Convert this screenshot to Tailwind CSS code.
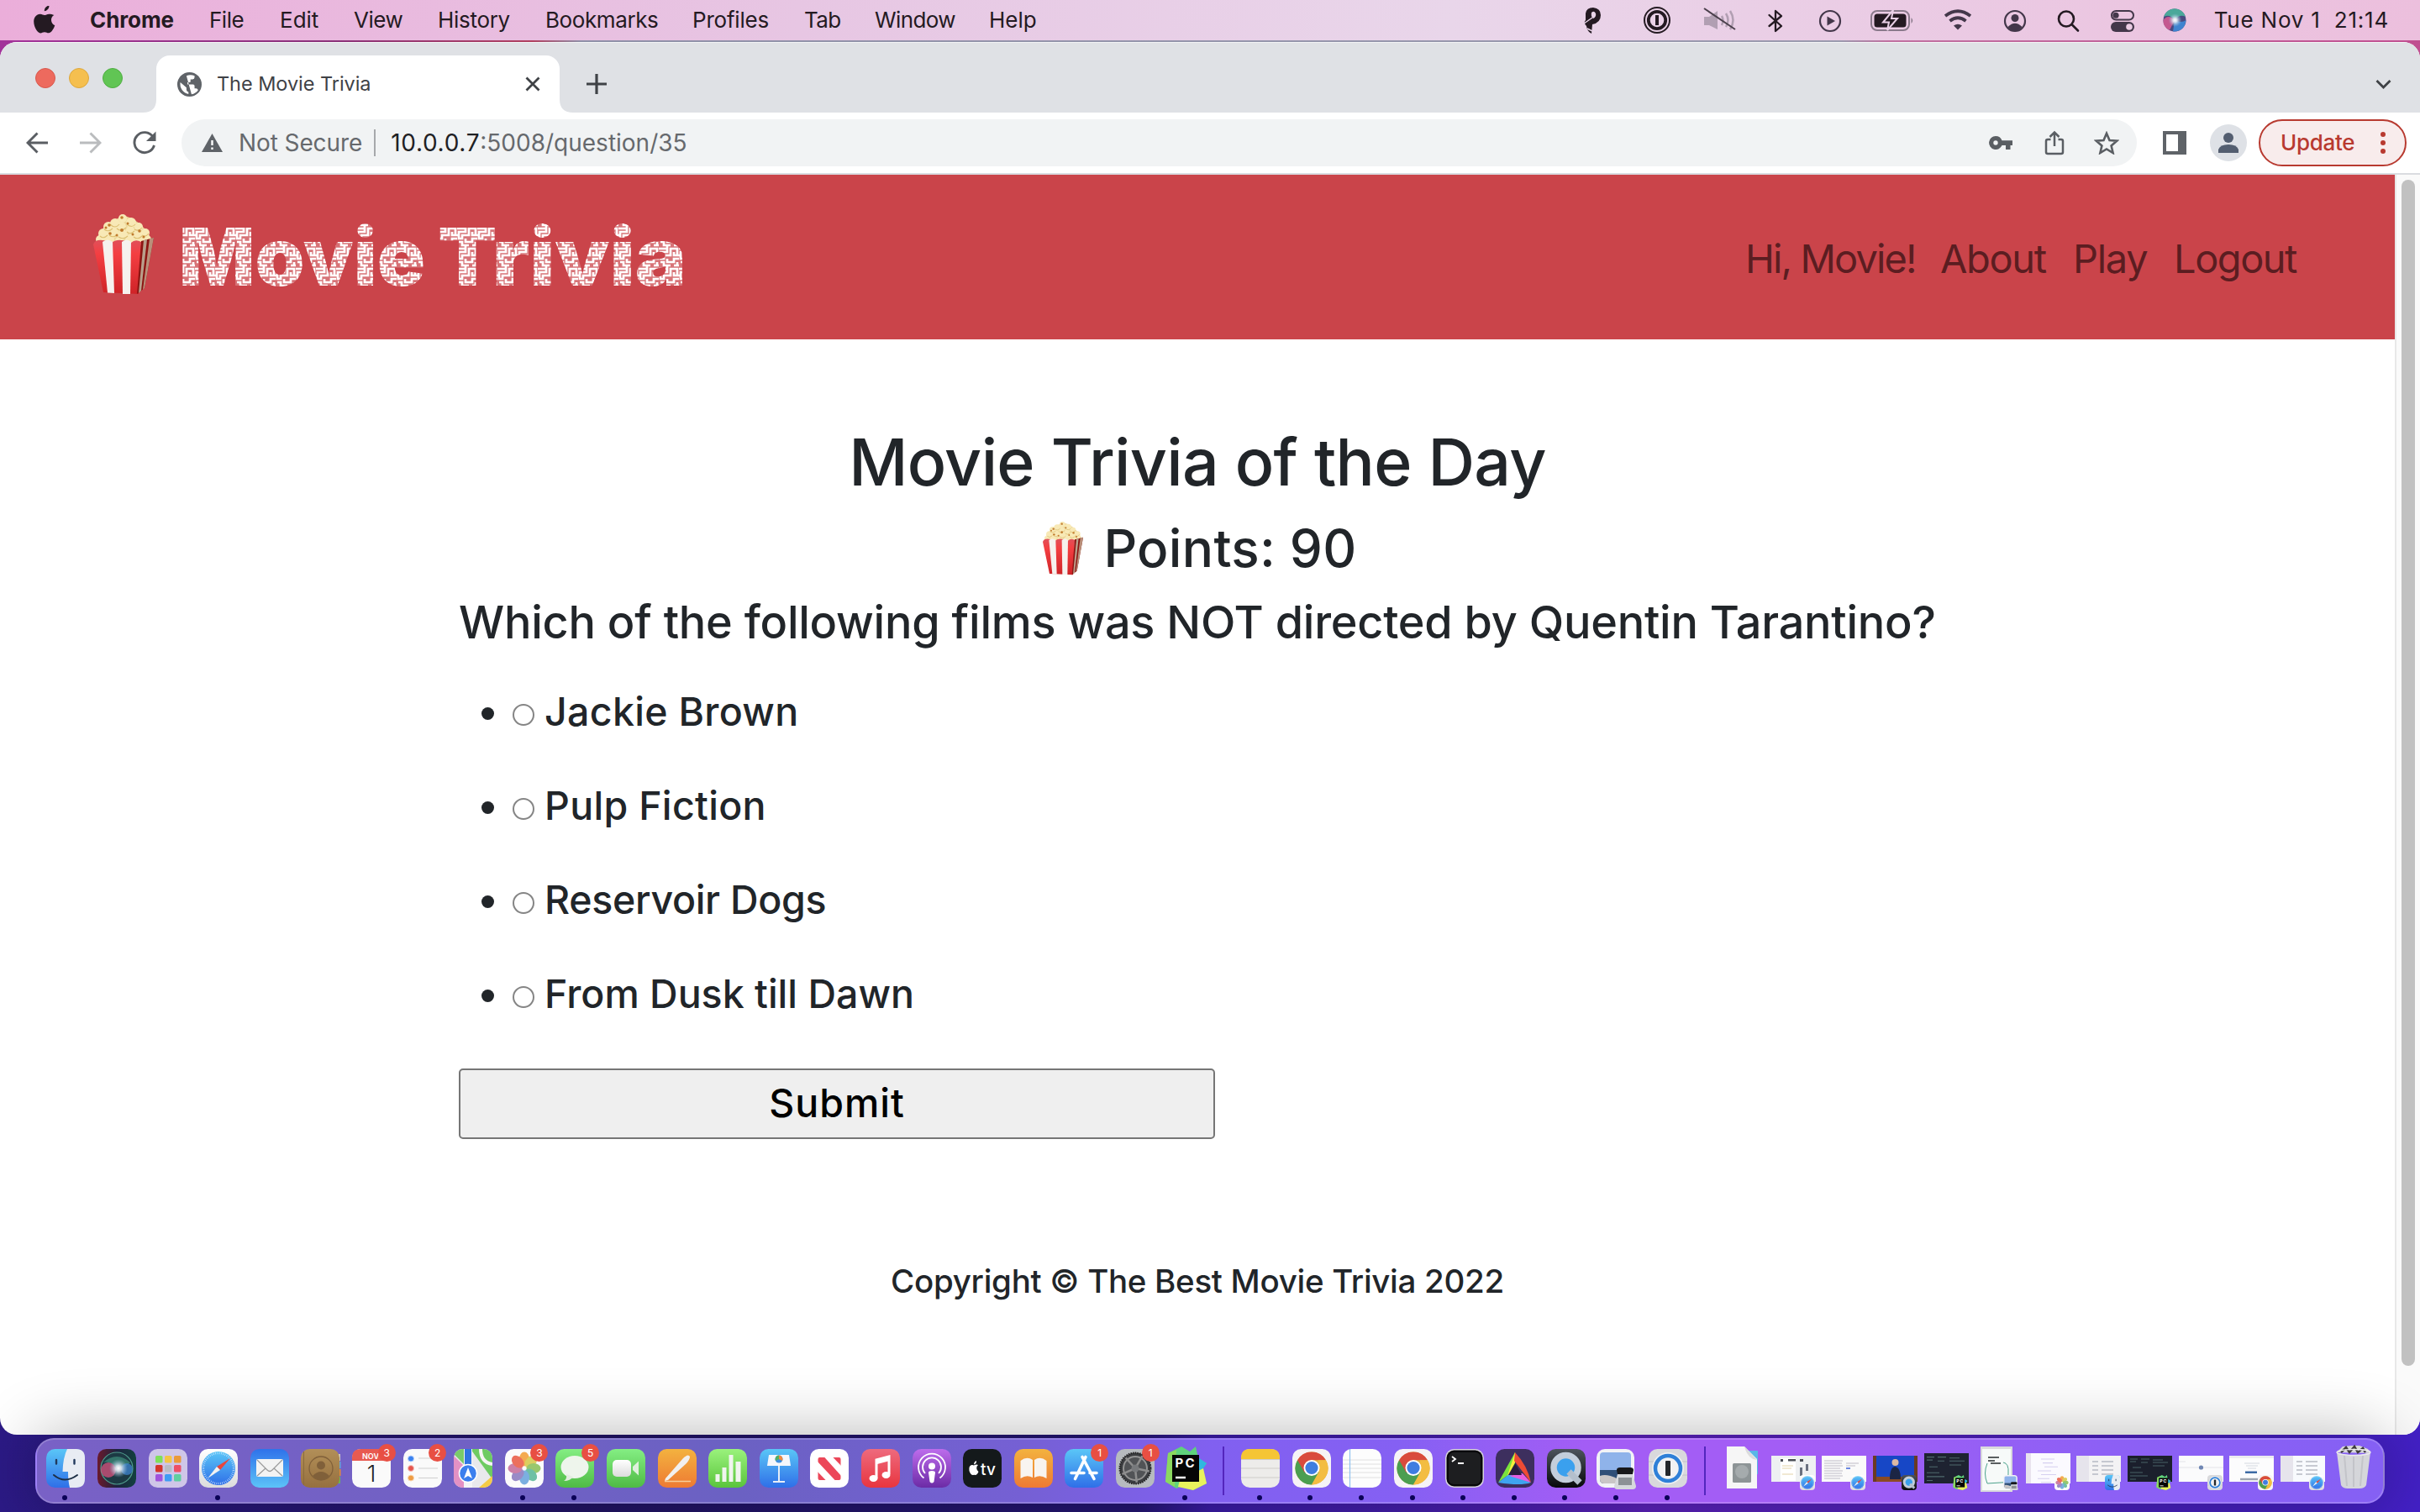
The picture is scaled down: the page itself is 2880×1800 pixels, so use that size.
<!DOCTYPE html>
<html lang="en">
<head>
<meta charset="utf-8">
<title>The Movie Trivia</title>
<script src="https://cdn.jsdelivr.net/npm/@tailwindcss/browser@4"></script>
</head>
<body class="w-[2880px] h-[1800px] overflow-hidden font-[Inter,sans-serif]">

<svg class="absolute w-0 h-0" aria-hidden="true">
  <defs>
    <linearGradient id="gBlue" x1="0" y1="0" x2="0" y2="1"><stop offset="0" stop-color="#5ac6f7"/><stop offset="1" stop-color="#2f6fe8"/></linearGradient>
    <linearGradient id="gMail" x1="0" y1="0" x2="0" y2="1"><stop offset="0" stop-color="#2f72ea"/><stop offset="1" stop-color="#5cc3f8"/></linearGradient>
    <linearGradient id="gGreen" x1="0" y1="0" x2="0" y2="1"><stop offset="0" stop-color="#84ee83"/><stop offset="1" stop-color="#4fbb45"/></linearGradient>
    <linearGradient id="gLime" x1="0" y1="0" x2="0" y2="1"><stop offset="0" stop-color="#9af27c"/><stop offset="1" stop-color="#5ac43c"/></linearGradient>
    <linearGradient id="gOrange" x1="0" y1="0" x2="0" y2="1"><stop offset="0" stop-color="#f3b23f"/><stop offset="1" stop-color="#ee7a33"/></linearGradient>
    <linearGradient id="gRed" x1="0" y1="0" x2="0" y2="1"><stop offset="0" stop-color="#ee6a7d"/><stop offset="1" stop-color="#e8353f"/></linearGradient>
    <linearGradient id="gPurple" x1="0" y1="0" x2="0" y2="1"><stop offset="0" stop-color="#bd6cec"/><stop offset="1" stop-color="#6c2ba6"/></linearGradient>
    <linearGradient id="gWhite" x1="0" y1="0" x2="0" y2="1"><stop offset="0" stop-color="#ffffff"/><stop offset="1" stop-color="#dcdcdc"/></linearGradient>
    <linearGradient id="gBrown" x1="0" y1="0" x2="0" y2="1"><stop offset="0" stop-color="#b28f58"/><stop offset="1" stop-color="#96703f"/></linearGradient>
    <linearGradient id="gDark" x1="0" y1="0" x2="0" y2="1"><stop offset="0" stop-color="#4d545c"/><stop offset="1" stop-color="#08090b"/></linearGradient>
    <linearGradient id="gSiri" x1="0" y1="0" x2="1" y2="0"><stop offset="0" stop-color="#6a1a2c"/><stop offset=".5" stop-color="#1d2340"/><stop offset="1" stop-color="#12413f"/></linearGradient>
    <radialGradient id="gOrb"><stop offset="0" stop-color="#fff"/><stop offset=".3" stop-color="#e6eef6" stop-opacity=".9"/><stop offset="1" stop-color="#8fb8d8" stop-opacity="0"/></radialGradient>
    <linearGradient id="gStripe" x1="0" y1="0" x2="0" y2="1"><stop offset="0" stop-color="#e0505a"/><stop offset=".25" stop-color="#f43f42"/><stop offset="1" stop-color="#cf2327"/></linearGradient>
    <pattern id="maze" width="24" height="24" patternUnits="userSpaceOnUse">
      <rect width="24" height="24" fill="#fff" fill-opacity=".25"/>
      <path d="M0 2H10V6H2V14H6V10H14V2H22V10H18V6M24 14H18V18H10V14M2 18H6V22H14M18 22H24M10 22V24M10 0V2M22 18V22M0 10H2M22 10H24" fill="none" stroke="#fff" stroke-width="2.700"/>
    </pattern>

    <symbol id="popcorn" viewBox="0 0 72 96">
      <path d="M4 31L8 22L14 14L25 8L35 1L46 5L55 11L64 20L69 30Q40 40 4 31Z" fill="#ecd79a"/>
      <g fill="#f8e9b6">
        <circle cx="35" cy="5" r="5"/><circle cx="26" cy="11" r="6"/><circle cx="45" cy="10" r="6"/><circle cx="18" cy="15" r="6"/><circle cx="54" cy="15" r="5"/><circle cx="33" cy="15" r="6"/><circle cx="44" cy="19" r="5"/><circle cx="12" cy="23" r="6"/><circle cx="62" cy="22" r="5"/><circle cx="24" cy="22" r="6"/><circle cx="35" cy="24" r="6"/><circle cx="53" cy="24" r="6"/><circle cx="8" cy="30" r="5"/><circle cx="19" cy="30" r="6"/><circle cx="44" cy="30" r="6"/><circle cx="31" cy="32" r="5"/><circle cx="64" cy="30" r="5"/><circle cx="55" cy="32" r="5"/>
      </g>
      <g fill="none" stroke="#dcbf72" stroke-width="1.100">
        <path d="M20 12Q26 18 31 12M40 12Q46 17 50 12M28 17Q33 22 39 16M13 18Q18 22 23 17M19 25Q24 29 29 24M30 27Q36 31 41 26M48 27Q53 31 58 26M8 26Q12 30 17 25M49 18Q54 21 58 16M40 21Q44 25 49 20M58 25Q62 28 66 23"/>
      </g>
      <g fill="#c07a2c">
        <circle cx="34" cy="4" r="1.800"/><circle cx="19" cy="13" r="1.800"/><circle cx="34" cy="19" r="2"/><circle cx="41" cy="11" r="1.500"/><circle cx="20" cy="23" r="1.800"/><circle cx="55" cy="20" r="1.800"/><circle cx="47" cy="24" r="1.500"/><circle cx="28" cy="25" r="1.500"/><circle cx="60" cy="27" r="1.500"/><circle cx="15" cy="16" r="1.500"/>
      </g>
      <path d="M0 36Q2 30 11 31Q17 31 22 34Q27 30 34 31Q39 31 45 34Q50 29 57 33L54 95L12 93Z" fill="url(#gStripe)"/>
      <path d="M11 33Q17 28 23 33L25 94L17 93.500Z" fill="#f6f1ee"/>
      <path d="M34 33Q40 28 45 33L44 95H35Z" fill="#f6f1ee"/>
      <path d="M57 32L72 28L61 88L52 95Z" fill="#8c1512"/>
      <path d="M60 31L64 30L57 91L54 94Z" fill="#b99f8b"/><path d="M67 29L72 28L61 88L59 90Z" fill="#b9907a"/>
    </symbol>

    <symbol id="finder" viewBox="0 0 46 46"><rect width="46" height="46" rx="10.500" fill="url(#gBlue)"/><path d="M25 0H35.500Q46 0 46 10.500V35.500Q46 46 35.500 46H28Q26 38 26 27H19.500Q20 10 25 0Z" fill="#e8ecf3"/><path d="M12 13V17.500M33.500 13V17.500" stroke="#21395c" stroke-width="2.400" stroke-linecap="round"/><path d="M9 31Q22 42 37 31" fill="none" stroke="#1d2f45" stroke-width="2" stroke-linecap="round"/></symbol>
    <symbol id="safari" viewBox="0 0 46 46"><rect width="46" height="46" rx="10.500" fill="url(#gWhite)"/><circle cx="23" cy="23" r="20" fill="url(#gBlue)"/><circle cx="23" cy="23" r="18" fill="none" stroke="#cfe6ff" stroke-width="2.400" stroke-dasharray=".7 1.600"/><path d="M37 11L21 21L25 25Z" fill="#e8453b"/><path d="M10 35L21 21L25 25Z" fill="#f2f2f2"/></symbol>
    <symbol id="chrome" viewBox="0 0 46 46"><rect width="46" height="46" rx="10.500" fill="#f6f3f6"/><circle cx="23" cy="23" r="19.500" fill="#e0b040"/><path d="M23 23L6.100 13.250A19.500 19.500 0 0 0 23 42.500L31.500 27.500Z" fill="#4b9e50"/><path d="M6.100 13.250A19.500 19.500 0 0 1 39.900 13.250H23L14.500 28Z" fill="#d94b3d"/><path d="M39.900 13.250A19.500 19.500 0 0 1 23 42.500L31.500 27.500L31 13.250Z" fill="#f3bd42"/><circle cx="23" cy="22.500" r="9.500" fill="#fff"/><circle cx="23" cy="22.500" r="7.600" fill="#3f7de0"/></symbol>
    <symbol id="photos" viewBox="0 0 46 46"><rect width="46" height="46" rx="10.500" fill="#fbfbfb"/><g opacity=".88"><ellipse cx="23" cy="12" rx="6" ry="8.500" fill="#f4a03a"/><ellipse cx="23" cy="12" rx="6" ry="8.500" fill="#d7c84b" transform="rotate(45 23 23)"/><ellipse cx="23" cy="12" rx="6" ry="8.500" fill="#8cc05a" transform="rotate(90 23 23)"/><ellipse cx="23" cy="12" rx="6" ry="8.500" fill="#5cb99a" transform="rotate(135 23 23)"/><ellipse cx="23" cy="12" rx="6" ry="8.500" fill="#6aa5dd" transform="rotate(180 23 23)"/><ellipse cx="23" cy="12" rx="6" ry="8.500" fill="#8c7cc0" transform="rotate(225 23 23)"/><ellipse cx="23" cy="12" rx="6" ry="8.500" fill="#c6709c" transform="rotate(270 23 23)"/><ellipse cx="23" cy="12" rx="6" ry="8.500" fill="#ea5d48" transform="rotate(315 23 23)"/></g></symbol>
    <symbol id="pycharm" viewBox="0 0 52 52"><path d="M4 8L20 0L30 6L37 0L40 14L50 20L44 28L50 44L34 52L18 48L14 50L1 42Z" fill="#5fd27c"/><path d="M38 12L50 20L42 32Z" fill="#2fb8e0"/><path d="M18 40L46 26L50 44L34 52L16 48Z" fill="#e9f25c"/><path d="M4 8L14 4L12 48L1 42Z" fill="#8bd860"/><rect x="9" y="10" width="32" height="32" fill="#060606"/><text x="12.500" y="25" font-family="Inter" font-weight="700" font-size="15" textLength="23" fill="#fff">PC</text><path d="M13 37H25" stroke="#fff" stroke-width="2.500"/></symbol>
    <symbol id="quick" viewBox="0 0 46 46"><rect width="46" height="46" rx="10.500" fill="url(#gDark)"/><circle cx="22.500" cy="22" r="14.500" fill="#3aa0ee" stroke="#c3cedb" stroke-width="7.500"/><path d="M26 27L39 40" stroke="#b4bfcc" stroke-width="7.500"/></symbol>
    <symbol id="onepw" viewBox="0 0 46 46"><rect width="46" height="46" rx="10.500" fill="#d9d9dc"/><path d="M0 15H46M0 31H46" stroke="#c2c2c6"/><circle cx="23" cy="23" r="19" fill="#eef0f2"/><circle cx="23" cy="23" r="15" fill="#f1f2f3" stroke="#2f80d8" stroke-width="4.500"/><rect x="20" y="14" width="6" height="18" rx="1" fill="#23272b"/></symbol>
    <symbol id="preview" viewBox="0 0 48 48"><rect width="45" height="46" rx="10" fill="#f2f3f6"/><path d="M4 8Q4 4 8 4H37Q41 4 41 8V26H4Z" fill="#8fb3ea"/><path d="M4 25H41V36Q41 41 36 41H9Q4 41 4 36Z" fill="#2f4f77"/><path d="M4 32Q12 29 24 35L28 41H9Q4 41 4 36Z" fill="#c9c6c6"/><path d="M24 25Q24 22 28 22H40Q44 22 44 25L43 30H25Z" fill="#17181b"/><path d="M25 30H43L47 44Q47 48 43 48H25Q21 48 21 44Z" fill="#d6d9dc"/><path d="M26 34H42V43H26Z" fill="#8c9196"/></symbol>
  </defs>
</svg>

<div class="w-[2880px] h-[1800px] flex flex-col bg-[linear-gradient(90deg,#2c1a86_0%,#221466_25%,#241673_47%,#3b1ca8_50%,#4a1fb0_62%,#5c22bd_68%,#4a20c0_88%,#4320c6_100%)]">

  <!-- Menu bar -->
  <header class="h-[48px] shrink-0 flex items-center bg-[linear-gradient(90deg,#ebaeda_0%,#e7c6e3_33%,#e9d6ea_60%,#ecbfdd_100%)] text-[26px] leading-none text-[#241a22] whitespace-pre">
    <svg class="ml-[38px] w-[30px] h-[34px] mr-[39px]" viewBox="0 0 30 34"><path d="M20.500 0C20.600 3.600 18 6.600 14.800 6.800C14.500 3.500 17.300.4 20.500 0ZM26.300 11.600C24 13 22.900 15 23 17.600C23.100 20.600 24.700 22.700 27.300 23.800C26.600 26 25.500 28 24.200 29.800C23 31.400 21.800 32.800 19.800 32.800C17.900 32.800 17.300 31.700 15 31.700C12.700 31.700 12 32.800 10.200 32.900C8.300 33 6.800 31.300 5.500 29.500C2.800 25.700.8 18.800 3.500 14.100C4.900 11.700 7.300 10.200 9.900 10.200C11.900 10.200 13.700 11.500 15 11.500C16.200 11.500 18.500 9.900 20.900 10.200C22 10.200 24.600 10.600 26.300 11.600Z" transform="translate(0 -.5)" fill="#241a22"/></svg>
    <span class="w-[142px] font-bold tracking-[-0.1px]">Chrome</span>
    <span class="w-[84px] tracking-[-0.5px]">File</span>
    <span class="w-[88px]">Edit</span>
    <span class="w-[100px] tracking-[-0.5px]">View</span>
    <span class="w-[128px] tracking-[-0.3px]">History</span>
    <span class="w-[175px] tracking-[-0.4px]">Bookmarks</span>
    <span class="w-[133px] tracking-[-0.2px]">Profiles</span>
    <span class="w-[84px] tracking-[-0.6px]">Tab</span>
    <span class="w-[136px] tracking-[-0.6px]">Window</span>
    <span>Help</span>

    <div class="ml-auto flex items-center">
      <svg class="w-[52px] h-[40px]" viewBox="0 0 52 40"><path d="M18 12Q19 5 27 5Q36 6 36 14Q36 23 26 25L25 36Q22 35 20 31L19 27Q15 23 18 20Z" fill="#241a22"/><path d="M25 11Q28 8 30 12Q31 16 27 18Q24 16 25 11Z" fill="#e8d4e8"/><path d="M16 24L26 17M20 30L26 33" stroke="#e8d4e8" stroke-width="1.500"/></svg>
      <svg class="ml-[25px] w-[52px] h-[40px]" viewBox="0 0 52 40" fill="none" stroke="#241a22"><circle cx="26" cy="20" r="15" stroke-width="2"/><circle cx="26" cy="20" r="10.200" stroke-width="3.800"/><path d="M26 14V26" stroke-width="4"/></svg>
      <svg class="ml-[23px] w-[52px] h-[40px]" viewBox="0 0 52 40"><path d="M7 16H13L23 9V31L13 26H7Z" fill="#b19fb2"/><path d="M28 15Q31 20 28 26M33 12Q38 20 33 28M38 9Q45 20 38 31" fill="none" stroke="#b19fb2" stroke-width="2.500"/><path d="M7 6L44 31" stroke="#4b404c" stroke-width="2"/></svg>
      <svg class="ml-[14px] w-[52px] h-[40px]" viewBox="0 0 52 40"><path d="M18.500 14L33 27L26 33V9L33 15L18.500 27" fill="none" stroke="#241a22" stroke-width="2.300" stroke-linejoin="round" stroke-linecap="round"/></svg>
      <svg class="ml-[13px] w-[52px] h-[40px]" viewBox="0 0 52 40"><circle cx="26" cy="21" r="12" fill="none" stroke="#43374a" stroke-width="2.200"/><path d="M22.500 15.500L32 21L22.500 26.500Z" fill="#43374a"/></svg>
      <svg class="ml-[22px] w-[52px] h-[40px]" viewBox="0 0 52 40"><rect x="1" y="9" width="45" height="23" rx="7" fill="none" stroke="#8a7a8b" stroke-width="2"/><rect x="4.500" y="12.500" width="38" height="16" rx="3.500" fill="#241a22"/><path d="M48.500 17Q52 20.500 48.500 24Z" fill="#8a7a8b"/><path d="M27 8L15 22.500H22L20 32L32 18H25Z" fill="#241a22" stroke="#e9d0e6" stroke-width="2"/></svg>
      <svg class="ml-[26px] w-[52px] h-[40px]" viewBox="0 0 52 40"><path d="M11 15Q26 3.500 41 15M16.500 21Q26 13.500 35.500 21" fill="none" stroke="#43374a" stroke-width="3.800"/><path d="M21 26.500Q26 23 31 26.500L26 31.500Z" fill="#43374a"/></svg>
      <svg class="ml-[16px] w-[52px] h-[40px]" viewBox="0 0 52 40"><circle cx="26" cy="21" r="12" fill="none" stroke="#43374a" stroke-width="2.200"/><circle cx="26" cy="17.500" r="4.500" fill="#43374a"/><path d="M17.500 28Q26 19.500 34.500 28Q31 33 26 33Q21 33 17.500 28Z" fill="#43374a"/></svg>
      <svg class="ml-[11px] w-[52px] h-[40px]" viewBox="0 0 52 40" fill="none" stroke="#241a22" stroke-width="2.600" stroke-linecap="round"><circle cx="24" cy="18.500" r="9"/><path d="M31 25.500L38 32.500"/></svg>
      <svg class="ml-[13px] w-[52px] h-[40px]" viewBox="0 0 52 40"><rect x="13" y="9" width="26" height="10.500" rx="5.250" fill="none" stroke="#43374a" stroke-width="2"/><circle cx="18" cy="14.250" r="3.600" fill="#43374a"/><rect x="12" y="22" width="28" height="12" rx="6" fill="#43374a"/><circle cx="34" cy="28" r="3.800" fill="#ebcce4"/></svg>
      <svg class="ml-[10px] w-[52px] h-[40px]" viewBox="0 0 52 40"><circle cx="26" cy="20" r="13.500" fill="#4a4a80"/><path d="M13 16A13.500 13.500 0 0 1 39 16Q32 12 26 20Q20 12 13 16Z" fill="#4aa89a"/><path d="M12.500 20Q18 12 26 20L20 32Q12 28 12.500 20Z" fill="#c4588f"/><path d="M39.500 20Q34 24 26 20L24 33.400Q38 34 39.500 20Z" fill="#3f83cf"/><circle cx="26.500" cy="20" r="8" fill="url(#gOrb)"/></svg>
      <span class="ml-[21px] mr-[37px] tracking-[0.78px]">Tue Nov 1  21:14</span>
    </div>
  </header>

  <!-- Browser window -->
  <div class="h-[1660px] shrink-0 pt-[2px] bg-[linear-gradient(90deg,#a2329a_0%,#8a3078_14%,#b0405f_22%,#8f90a8_24%,#9a9aae_76%,#c070a0_78%,#c04e90_100%)] bg-[length:100%_40px] bg-no-repeat">
   <div class="h-[1658px] flex flex-col rounded-[20px] overflow-hidden bg-white">

    <div class="h-[84px] shrink-0 flex items-end bg-[#dfe1e5] border-t border-[#f3f4f5]">
      <div class="ml-[42px] mb-[29px] flex gap-[16px]">
        <span class="size-[24px] rounded-full bg-[#ed6a5e] border border-[#d8584d]"></span>
        <span class="size-[24px] rounded-full bg-[#f5bf4f] border border-[#dda73c]"></span>
        <span class="size-[24px] rounded-full bg-[#61c554] border border-[#4fae42]"></span>
      </div>
      <svg class="ml-[24px] w-[16px] h-[16px]" viewBox="0 0 16 16"><path d="M16 0V16H0Q16 16 16 0Z" fill="#fff"/></svg>
      <div class="w-[480px] h-[68px] bg-white rounded-t-[16px] flex items-center px-[25px]">
        <svg class="w-[29px] h-[29px]" viewBox="0 0 24 24"><circle cx="12" cy="12" r="12" fill="#5f6368"/><path d="M3 10L9 15V17Q9 19 11 19.500V21.500A10 10 0 0 1 3 10ZM9 3.500Q13 2 17 3.500V5Q17 7 15 7H13V9Q13 10 11.500 10H10V12H15.500Q17 12 17 13.500V16H18.500Q20 16 20.500 17.500A10 10 0 0 1 14 21.700" fill="#fff"/></svg>
        <span class="ml-[18px] text-[23.500px] leading-none text-[#3f4246] whitespace-nowrap tracking-[-0.05px]">The Movie Trivia</span>
        <svg class="ml-auto -mr-[2px] w-[18px] h-[18px]" viewBox="0 0 18 18"><path d="M1.500 1.500L16.500 16.500M16.500 1.500L1.500 16.500" stroke="#3f4246" stroke-width="2.800"/></svg>
      </div>
      <svg class="w-[16px] h-[16px]" viewBox="0 0 16 16"><path d="M0 0V16H16Q0 16 0 0Z" fill="#fff"/></svg>
      <svg class="ml-[16px] mb-[22px] w-[24px] h-[24px]" viewBox="0 0 24 24"><path d="M12 0V24M0 12H24" stroke="#3f4246" stroke-width="3.200"/></svg>
      <svg class="ml-auto mr-[34px] mb-[27px] w-[19px] h-[13px]" viewBox="0 0 19 13"><path d="M1.500 2L9.500 10L17.500 2" fill="none" stroke="#3f4246" stroke-width="2.800"/></svg>
    </div>

    <div class="h-[74px] shrink-0 flex items-center bg-white border-b-2 border-[#dadce0]">
      <svg class="ml-[31px] w-[26px] h-[26px]" viewBox="0 0 26 26"><path d="M26 13H2.500M13.500 1.500L2 13L13.500 24.500" fill="none" stroke="#5a5e63" stroke-width="2.900"/></svg>
      <svg class="ml-[38px] w-[26px] h-[26px]" viewBox="0 0 26 26"><path d="M0 13H23.500M12.500 1.500L24 13L12.500 24.500" fill="none" stroke="#babcbe" stroke-width="2.900"/></svg>
      <svg class="ml-[37px] w-[28px] h-[28px]" viewBox="0 0 28 28"><path d="M24 7A12 12 0 1 0 25.500 17" fill="none" stroke="#5a5e63" stroke-width="2.900"/><path d="M27.500.5V12H16Z" fill="#5a5e63"/></svg>
      <div class="ml-[30px] w-[2327px] h-[56px] rounded-full bg-[#f1f3f4] flex items-center text-[28px] leading-none text-[#66696d] whitespace-nowrap">
        <svg class="ml-[24px] w-[25px] h-[22px]" viewBox="0 0 25 22"><path d="M12.500 0L25 22H0Z" fill="#5f6368"/><path d="M12.500 8V14M12.500 16.500V19" stroke="#fff" stroke-width="2.400"/></svg>
        <span class="ml-[19px] tracking-[-0.1px]">Not Secure</span>
        <span class="ml-[14px] w-[2px] h-[32px] bg-[#a6a8ab]"></span>
        <span class="ml-[18px] text-[#1f2124] tracking-[0.7px]">10.0.0.7</span><span>:5008/question/35</span>
        <svg class="ml-auto w-[28px] h-[16px]" viewBox="0 0 28 16"><path d="M8 0A8 8 0 0 1 15.500 5.300H28V11H25.500V16H20V11H15.500A8 8 0 1 1 8 0ZM8 5.300A2.700 2.700 0 1 0 8 10.700A2.700 2.700 0 1 0 8 5.300Z" fill="#5a5e63" fill-rule="evenodd"/></svg>
        <svg class="ml-[38px] w-[24px] h-[30px]" viewBox="0 0 24 30"><path d="M7.500 11H4Q2 11 2 13V26Q2 28 4 28H20Q22 28 22 26V13Q22 11 20 11H16.500M12 19V3M6.500 8L12 2.500L17.500 8" fill="none" stroke="#5a5e63" stroke-width="2.500"/></svg>
        <svg class="ml-[35px] mr-[21px] w-[30px] h-[28px]" viewBox="0 0 30 28"><path d="M15 2.800L18.500 11L27.200 11.700L20.600 17.500L22.600 26L15 21.500L7.400 26L9.400 17.500L2.800 11.700L11.500 11Z" fill="none" stroke="#5a5e63" stroke-width="2.600"/></svg>
      </div>
      <svg class="ml-[31px] w-[28px] h-[28px]" viewBox="0 0 28 28"><path d="M0 0H28V28H0ZM4 4V24H18V4Z" fill="#5f6368" fill-rule="evenodd"/></svg>
      <svg class="ml-[28px] w-[44px] h-[44px]" viewBox="0 0 44 44"><circle cx="22" cy="22" r="22" fill="#dee1e6"/><circle cx="22" cy="16" r="6" fill="#535e70"/><path d="M10 34V30Q12 24 22 24Q32 24 34 30V34Z" fill="#535e70"/></svg>
      <div class="ml-[14px] w-[176px] h-[56px] rounded-full border-2 border-[#b83a30] bg-[#f8ecec] flex items-center pl-[24px] text-[26px] leading-none text-[#b83a30]">
        <span class="font-medium tracking-[-0.3px]">Update</span>
        <svg class="ml-auto mr-[23px] w-[6px] h-[28px]" viewBox="0 0 6 28"><circle cx="3" cy="4" r="3" fill="#b83a30"/><circle cx="3" cy="14" r="3" fill="#b83a30"/><circle cx="3" cy="24" r="3" fill="#b83a30"/></svg>
      </div>
    </div>

    <div class="flex-1 flex">
      <main class="w-[2850px] flex flex-col text-[#212529]">
        <nav class="h-[196px] shrink-0 bg-[#ca444a] flex items-center">
          <svg class="ml-[111px] -mt-[6px] w-[72px] h-[96px]"><use href="#popcorn"/></svg>
          <svg class="ml-[25px] w-[640px] h-[120px]" viewBox="0 0 640 120"><g font-family="Inter" font-weight="900" font-size="95" fill="url(#maze)"><text x="5" y="94" textLength="293" lengthAdjust="spacingAndGlyphs">Movie</text><text x="313" y="94" textLength="296" lengthAdjust="spacingAndGlyphs">Trivia</text></g></svg>
          <div class="ml-auto mr-[117px] flex text-[47px] leading-none text-[#5b1d21] whitespace-nowrap pt-[2px]">
            <span class="w-[232px] tracking-[-1.9px]">Hi, Movie!</span>
            <span class="w-[158px] tracking-[-1.4px]">About</span>
            <span class="w-[120px] tracking-[-1.3px]">Play</span>
            <span class="tracking-[-1.5px]">Logout</span>
          </div>
        </nav>

        <h1 class="mt-[98px] h-[96px] text-center text-[77px] leading-[96px] font-[450] tracking-[-0.7px]">Movie Trivia of the Day</h1>
        <h2 class="mt-[17px] h-[76px] flex justify-center items-center pl-[6px] text-[62px] leading-[76px] font-[450] tracking-[0.3px]">
          <svg class="w-[48px] h-[64px] mr-[24px]"><use href="#popcorn"/></svg>Points: 90
        </h2>
        <h3 class="mt-[18px] ml-[546px] h-[64px] text-[54px] leading-[64px] whitespace-nowrap font-medium tracking-[-0.24px]">Which of the following films was NOT directed by Quentin Tarantino?</h3>

        <form class="ml-[546px] mt-[18px]">
          <ul class="text-[46.500px] leading-none whitespace-nowrap font-medium">
            <li class="h-[112px] flex items-center pl-[27px]"><span class="size-[15px] mt-[4px] rounded-full bg-[#212529]"></span><span class="ml-[22px] mt-[8px] size-[26px] rounded-full border-2 border-[#858585] bg-white"></span><span class="ml-[12px] tracking-[0.3px]">Jackie Brown</span></li>
            <li class="h-[112px] flex items-center pl-[27px]"><span class="size-[15px] mt-[4px] rounded-full bg-[#212529]"></span><span class="ml-[22px] mt-[8px] size-[26px] rounded-full border-2 border-[#858585] bg-white"></span><span class="ml-[12px] tracking-[0.3px]">Pulp Fiction</span></li>
            <li class="h-[112px] flex items-center pl-[27px]"><span class="size-[15px] mt-[4px] rounded-full bg-[#212529]"></span><span class="ml-[22px] mt-[8px] size-[26px] rounded-full border-2 border-[#858585] bg-white"></span><span class="ml-[12px] tracking-[-0.3px]">Reservoir Dogs</span></li>
            <li class="h-[112px] flex items-center pl-[27px]"><span class="size-[15px] mt-[4px] rounded-full bg-[#212529]"></span><span class="ml-[22px] mt-[8px] size-[26px] rounded-full border-2 border-[#858585] bg-white"></span><span class="ml-[12px]">From Dusk till Dawn</span></li>
          </ul>
          <button type="button" class="block mt-[33px] w-[900px] h-[84px] rounded-[5px] border-2 border-[#767676] bg-[#efefef] text-black text-[46.500px] leading-none font-medium tracking-[1px] pb-[2px]">Submit</button>
        </form>

        <footer class="mt-[145px] h-[48px] text-center text-[38.500px] leading-[48px] font-medium tracking-[-0.3px]">Copyright © The Best Movie Trivia 2022</footer>
      </main>
      <div class="w-[30px] bg-[#fafafa] border-l-2 border-[#e8e8e8] pl-[6px] pt-[6px]"><div class="w-[16px] h-[1412px] rounded-full bg-[#c1c1c1]"></div></div>
    </div>
   </div>
  </div>

  <!-- Dock -->
  <div class="relative h-[92px] shrink-0 pt-[4px] pl-[42px]">
    <div class="w-[2796px] h-[78px] rounded-[22px] border-2 border-white/20 bg-[linear-gradient(90deg,#7961c6_0%,#6b61c3_30%,#7560d4_42%,#8160f0_50%,#8560f3_58%,#a35df5_66%,#a35df5_75%,#8d60f5_88%,#8560f4_100%)] shadow-[0_0_80px_rgba(0,0,0,0.32)] pt-[11px] pl-[4px] flex" id="dock"></div>
  </div>
</div>

<script>
  const rr = (fill) => `<rect width="46" height="46" rx="10.5" fill="${fill}"/>`;
  const svg = (body, vb = "0 0 46 46") => `<svg class="w-[46px] h-[46px] overflow-visible" viewBox="${vb}">${body}</svg>`;
  const use = (id) => svg(`<use href="#${id}" width="46" height="46"/>`);
  const launch = ["#7fe05a","#f4c545","#ea9a3a","#d5352b","#b9bcc4","#ee4f66","#a152dc","#3f9cf4","#5fcfa0"]
    .map((c, i) => `<rect x="${8 + (i % 3) * 11}" y="${8 + Math.floor(i / 3) * 11}" width="8.5" height="8.5" rx="1.5" fill="${c}"/>`).join("");
  const gear = Array.from({length: 5}, (_, i) => `<path d="M23 23V6" stroke="#8d8d8d" stroke-width="2.5" transform="rotate(${i * 72 + 30} 23 23)"/>`).join("");
  const num = (t, x, y, s, w, c) => `<text x="${x}" y="${y}" text-anchor="middle" font-family="Inter" font-size="${s}" font-weight="${w}" fill="${c}">${t}</text>`;

  const apps = [
    {s: use("finder"), dot: 1},
    {s: svg(rr("url(#gSiri)") + `<circle cx="23" cy="23" r="19" fill="#1c3a44" stroke="#4f9c8c" stroke-width="1.2"/><path d="M7 16Q23 2 39 16Q32 24 23 22Q14 14 7 16Z" fill="#3f8f7c" opacity=".7"/><circle cx="13" cy="25" r="9" fill="#d8517c" opacity=".75"/><circle cx="35" cy="24" r="7" fill="#3d84cf" opacity=".75"/><circle cx="25" cy="23" r="11" fill="url(#gOrb)"/>`)},
    {s: svg(rr("#cfc6e8") + launch)},
    {s: use("safari"), dot: 1},
    {s: svg(rr("url(#gMail)") + `<rect x="7" y="12" width="32" height="21" rx="2" fill="#f3f3f3"/><path d="M8 13L20 25Q23 28 26 25L38 13M8 32L18 23M38 32L28 23" fill="none" stroke="#9a9a9a" stroke-width="1.2"/>`)},
    {s: svg(`<path d="M40 6H47V14H40Z" fill="#cfc9c4"/><path d="M40 15H47.500V23H40Z" fill="#64a7d8"/><path d="M40 24H47.500V32H40Z" fill="#e2883b"/><path d="M40 33H47V41H40Z" fill="#68b857"/>` + rr("url(#gBrown)") + `<path d="M3.500 3V43" stroke="#8a6a3c"/><circle cx="24" cy="23" r="14" fill="none" stroke="#80603a" stroke-width="1.300"/><circle cx="24" cy="19.500" r="5" fill="#80603a"/><path d="M14 32Q24 22 34 32Q30 37 24 37Q18 37 14 32Z" fill="#80603a"/>`)},
    {s: svg(rr("#fafafa") + `<path d="M0 14V10.500Q0 0 10.500 0H35.500Q46 0 46 10.500V14Z" fill="#e85a50"/>` + num("NOV", 22, 11.5, 9, 600, "#fff") + num("1", 23, 39, 27, 300, "#222")), b: 3},
    {s: svg(rr("#fafafa") + `<path d="M18 11H41M18 23H41M18 34.500H41" stroke="#cfcfcf" stroke-width="1.200"/><circle cx="9" cy="11.500" r="3.500" fill="#3b82f0" stroke="#b9d2fa"/><circle cx="9" cy="23" r="3.500" fill="#e5564d" stroke="#f5c3bf"/><circle cx="9" cy="34.500" r="3.500" fill="#ee9c44" stroke="#f8d9b5"/>`), b: 2},
    {s: svg(`<clipPath id="mc">${rr("#fff")}</clipPath><g clip-path="url(#mc)"><rect width="46" height="46" fill="#e9e9ec"/><path d="M20 0H46V36Z" fill="#6ecb63"/><path d="M0 8L12 20V46H0Z" fill="#e391c4"/><path d="M0 0H12V18L0 6Z" fill="#7acb6a"/><path d="M30 46L46 32V46Z" fill="#f5cb46"/><path d="M32 0Q32 16 46 18" fill="none" stroke="#f5f5f5" stroke-width="4"/><path d="M12 0H22V46H12Z" fill="#f4f4f6"/><path d="M13 0H21V24H13Z" fill="#2f74e4"/></g><circle cx="17" cy="29" r="10.500" fill="#3c7fee" stroke="#fff" stroke-width="1.500"/><path d="M17 22L22 35L17 32L12 35Z" fill="#fff"/>`)},
    {s: use("photos"), dot: 1, b: 3},
    {s: svg(rr("url(#gGreen)") + `<ellipse cx="23" cy="21.500" rx="16.500" ry="13.500" fill="#eef5ec"/><path d="M13 30Q14 36 10 38Q18 38 21 33Z" fill="#e3ede0"/>`), dot: 1, b: 5},
    {s: svg(rr("url(#gGreen)") + `<rect x="7" y="13" width="22" height="20" rx="5" fill="url(#gWhite)"/><path d="M31 21L38 14.500V31.500L31 25Z" fill="#dff0dc"/>`)},
    {s: svg(rr("url(#gOrange)") + `<path d="M9 35L30 11Q36 5 38 9Q38 13 33 18L12 37L8 38Z" fill="#f2f0ee"/><path d="M8 38.500H39" stroke="#f7cf9b" stroke-width="1.500"/>`)},
    {s: svg(rr("url(#gLime)") + `<path d="M8.500 30H13.500V39H8.500ZM16.500 22H21.500V39H16.500ZM24.500 7H29.500V39H24.500ZM32.500 15H38.500V39H32.500Z" fill="#f0f5ee"/>`)},
    {s: svg(rr("url(#gBlue)") + `<path d="M11 7H35L37 20H9Z" fill="#f5f7fb"/><path d="M22 20H24V38H30V40H16V38H22Z" fill="#e6edf7"/><circle cx="23" cy="12" r="4.500" fill="#3f8fe0"/><path d="M23 12V7.500A4.500 4.500 0 0 1 27 14Z" fill="#ef8a3d"/><path d="M23 12L19 14A4.500 4.500 0 0 1 23 7.500Z" fill="#52b060"/>`)},
    {s: svg(rr("#fff") + `<rect x="9.500" y="10" width="27" height="27" rx="2" fill="#ec4759"/><path d="M16 8.500H26L38 21V33Z" fill="#fff"/><path d="M8 14V26L20 38.500H31Z" fill="#fff"/>`)},
    {s: svg(rr("url(#gRed)") + `<path d="M18 35V13L33 9V30" fill="none" stroke="#fff" stroke-width="3"/><path d="M17 14L34 9.500V14L17 18.500Z" fill="#fff"/><ellipse cx="14.500" cy="35" rx="5" ry="4" fill="#fff"/><ellipse cx="29.500" cy="31" rx="5" ry="4" fill="#fff"/>`)},
    {s: svg(rr("url(#gPurple)") + `<circle cx="23" cy="20.500" r="4" fill="#fff"/><path d="M19 28Q19 26 23 26Q27 26 27 28L25.500 39Q23 42 20.500 39Z" fill="#fff"/><path d="M15 29A11 11 0 1 1 31 29M13.500 34.500A16 16 0 1 1 32.500 34.500" fill="none" stroke="#fff" stroke-width="1.800"/>`)},
    {s: svg(rr("#14191b") + `<path d="M18 19Q16 20.500 16.200 23Q16.500 25.500 18.500 27Q17 31 14.500 31Q13.500 30.300 12 31Q9 31 7.500 26Q6.500 20 10.500 19Q12 18.800 13 19.500Q16 18 18 19ZM13 18.500Q13 15 16 14Q16.300 17.500 13 18.500Z" fill="#fff"/>` + num("tv", 30, 30.5, 19, 500, "#fff"))},
    {s: svg(rr("url(#gOrange)") + `<path d="M7.500 14Q15 8 22 13V34Q15 30 7.500 35ZM38.500 14Q31 8 24 13V34Q31 30 38.500 35Z" fill="#f8f4f0"/>`)},
    {s: svg(rr("url(#gBlue)") + `<path d="M25 9.500L12.500 35.500M21 9.500L35 35.500M8 28.500H23M30 28.500H38" stroke="#fff" stroke-width="3.600" stroke-linecap="round"/>`), b: 1},
    {s: svg(rr("#b7bbbf") + `<circle cx="23" cy="23" r="18.500" fill="#3b3d40" stroke="#222" stroke-width="2" stroke-dasharray="1.500 1.200"/><circle cx="23" cy="23" r="14" fill="#515356" stroke="#949494" stroke-width="2"/>${gear}<circle cx="23" cy="23" r="4.500" fill="#77797c"/>`), b: 1},
    {s: `<svg class="w-[52px] h-[52px] -m-[3px] shrink-0"><use href="#pycharm"/></svg>`, dot: 1},
    {sep: 1},
    {s: svg(rr("#edecea") + `<path d="M0 12V10.500Q0 0 10.500 0H35.500Q46 0 46 10.500V12Z" fill="#f5c534"/><path d="M0 12.500H46M0 23H46M0 34H46" stroke="#cfcdc9"/>`), dot: 1},
    {s: use("chrome"), dot: 1},
    {s: svg(rr("#fdfdfd") + `<path d="M0 13H46M0 18H46M0 23H46M0 28H46M0 34H46" stroke="#e0e0e0"/><path d="M8.500 0V46" stroke="#8fc2ee" stroke-width="1.200"/>`), dot: 1},
    {s: use("chrome"), dot: 1},
    {s: svg(rr("#d7d4dc") + `<rect x="1.500" y="1.500" width="43" height="43" rx="9" fill="#08080a"/><rect x="4" y="4" width="38" height="38" rx="6" fill="#1d1e20"/><path d="M8 9L12 12L8 15M15 17H22" fill="none" stroke="#fff" stroke-width="1.800"/>`), dot: 1},
    {s: svg(rr("#3d2f5e") + `<path d="M23 4L3 40Q10 34 23 26Z" fill="#7be33c"/><path d="M23 4L12 38L24 14Z" fill="#f6ee3c"/><path d="M23 4Q38 20 42 40L22 14Z" fill="#ee4b34"/><path d="M42 40Q30 44 3 40L16 30Z" fill="#3fa4f0"/><path d="M42 40L16 32L32 29Z" fill="#e65fe0"/><path d="M23 17L31 31H15Z" fill="#2a1c3f"/>`), dot: 1},
    {s: use("quick"), dot: 1},
    {s: `<svg class="w-[48px] h-[48px] shrink-0"><use href="#preview"/></svg>`, dot: 1},
    {s: use("onepw"), dot: 1},
    {sep: 1},
    {s: svg(`<path d="M30 2H42V30H30Z" fill="#5ab6e6"/><path d="M5 -3H26L41 12V47H5Z" fill="#f6f6f6"/><path d="M26 -3L41 13Q30 12 26 -3Z" fill="#dcdcdc"/><rect x="12" y="17" width="22" height="23" rx="1.500" fill="#8d9496"/><circle cx="23" cy="27" r="8" fill="#a5abad"/>`)},
    {th: "#eef0f2", u: "safari", k: "page"}, {th: "#fafafa", u: "safari", k: "text"},
    {th: "#1747c6", u: "quick", k: "tv"}, {th: "#1e2331", u: "pycharm", k: "code", big: 1}, {th: "#f7faf9", u: "preview", k: "tall"},
    {th: "#fbfaff", u: "photos", k: "note", big: 1}, {th: "#f3f2f4", u: "finder", k: "list"}, {th: "#1b1f2c", u: "pycharm", k: "code"},
    {th: "#fbfbfc", u: "onepw", k: "dotp"}, {th: "#fcfcfd", u: "chrome", k: "form"}, {th: "#f8fafd", u: "safari", k: "list"},
    {s: svg(`<path d="M3 4L10 -3L20 -4L30 -4L40 0L43 5Z" fill="#d7d8da"/><path d="M8 4L14 -2L18 4L24 -3L28 4L34 -1L37 4" fill="none" stroke="#3d3a3c" stroke-width="2.500"/><path d="M3 4Q23 11 43 4L38 43Q36 47 30 47H16Q10 47 8 43Z" fill="#d5d6da"/><path d="M12 8L15 44M23 9V45M34 8L31 44" stroke="#c3c4c9" stroke-width="2"/><ellipse cx="23" cy="4" rx="20" ry="3.500" fill="none" stroke="#ececee" stroke-width="1.300"/>`)}
  ];
  const art = {
    page: `<rect x="11" y="3" width="18" height="27" fill="#fff"/><path d="M11 4H14V7H11ZM20 4H29V6.500H20ZM34 4H38V7H34Z" fill="#4a4e56"/><path d="M13 12H26M13 15H24M13 22H26" stroke="#e2d3a8"/><path d="M34 14H37V24H34ZM41 10H44V18H41Z" fill="#6a7180"/>`,
    text: `<path d="M3 6H25M3 9H24M3 12H25M3 15H22M3 18H25M3 21H24M3 24H25M3 27H22M29 9H44M29 12H40" stroke="#b9b6c2" stroke-width=".9"/><path d="M29 15H34" stroke="#3d62d8" stroke-width="1.500"/>`,
    tv: `<rect y="25" width="53" height="6" fill="#8a4a24"/><path d="M0 0V31H4V0ZM49 0V31H53V0Z" fill="#6b3a22"/><path d="M20 28Q20 14 26 13Q33 14 33 28Z" fill="#1b2544"/><circle cx="26.500" cy="8" r="4" fill="#dcb8a4"/>`,
    code: `<path d="M3 4H12M3 7H10M16 4H26M16 8H24M30 5H42M30 8H48M30 12H44M6 14H16M3 20H18M3 24H24M3 28H10" stroke="#4f6a6d" stroke-width=".9"/>`,
    note: `<path d="M0 0H6V40H0Z" fill="#e9e3ee"/><path d="M18 6H34M20 10H32M22 14H38M14 18H30M18 22H36M14 26H28M18 30H30" stroke="#d6d0f0" stroke-width=".9"/>`,
    list: `<path d="M0 0H15V31H0Z" fill="#e6e4ec"/><path d="M19 7H26M30 7H44M19 12H26M30 12H44M19 17H26M30 17H44M19 22H26M30 22H44" stroke="#b6bac4" stroke-width="1.300"/>`,
    dotp: `<path d="M0 14H53M0 7H8" stroke="#e4e4e8"/><circle cx="26.500" cy="14" r="2.600" fill="#7087b4"/>`,
    form: `<path d="M0 0H53V3H0Z" fill="#ececf0"/><path d="M18 9H36M20 12H34M22 15H32" stroke="#d4d8e0"/><rect x="19" y="18.500" width="14" height="2.500" fill="#3d6ba5"/><path d="M13 28H46" stroke="#9ea5b1" stroke-width="2.500"/>`
  };
  const thumb = (a) => a.k === "tall"
    ? `<svg class="absolute left-[11px] -top-[3px] w-[38px] h-[54px]" viewBox="0 0 38 54"><rect width="38" height="54" fill="#d9dadd"/><rect x="2" y="3" width="34" height="49" fill="${a.th}"/><path d="M9 13H22M9 17H17M12 20H24" stroke="#262b2e" stroke-width="1.300"/><path d="M8 20Q3 32 8 44L24 43Q34 44 33 32Q34 20 27 19" fill="none" stroke="#4da38d"/></svg>`
    : `<svg class="absolute left-[4px] ${a.big ? "top-[5px] h-[36px]" : "top-[8px] h-[31px]"} w-[53px]" viewBox="0 0 53 31" preserveAspectRatio="none"><rect width="53" height="31" fill="${a.th}"/>${art[a.k]}</svg>`;

  document.getElementById("dock").innerHTML = apps.map((a) => {
    if (a.sep) return `<div class="w-[27.800px] shrink-0 flex justify-center -mt-[3px]"><span class="w-[2px] h-[58px] bg-[#5326bd]"></span></div>`;
    const badge = a.b ? `<span class="absolute left-[38px] -top-[6px] size-[21px] rounded-full bg-[#e84f43] text-white text-[12px] leading-[21px] text-center">${a.b}</span>` : "";
    const dot = a.dot ? `<span class="absolute left-[26px] top-[55px] size-[6px] rounded-full bg-[#0b0357]"></span>` : "";
    const body = a.th ? thumb(a) + `<svg class="absolute left-[38px] top-[31px] w-[18px] h-[18px]"><use href="#${a.u}"/></svg>` : a.s;
    return `<div class="relative w-[60.620px] h-[46px] shrink-0 flex justify-center">${body}${badge}${dot}</div>`;
  }).join("");
</script>
</body>
</html>
